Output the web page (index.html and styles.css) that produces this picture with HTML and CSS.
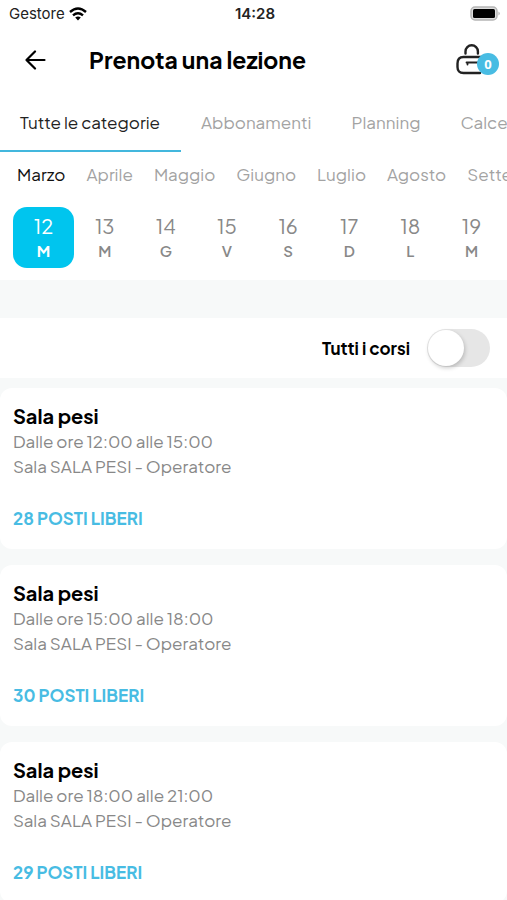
FILE: index.html
```html
<!DOCTYPE html>
<html lang="it">
<head>
<meta charset="utf-8">
<meta name="viewport" content="width=device-width, initial-scale=1">
<title>Prenota una lezione</title>
<link rel="stylesheet" href="styles.css">
</head>
<body>
<div class="status">
  <div class="carrier">Gestore
    <svg width="18" height="14" viewBox="0 0 18 14" aria-hidden="true"><g fill="none" stroke="#000" stroke-width="2.4"><path d="M1 5Q9-2 17 5"/><path d="M4 8.3Q9 4 14 8.3"/></g><path d="M6.2 10.6Q9 8.4 11.8 10.6L9 13.6z"/></svg>
  </div>
  <time class="clock">14:28</time>
  <svg class="battery" width="31" height="16" viewBox="0 0 31 16" aria-hidden="true"><rect x="1" y="1" width="26" height="13" rx="4" fill="#ddd" stroke="#b5b5b5" stroke-width="1.5"/><rect x="3" y="3" width="22" height="9" rx="1.5"/><path d="M28.5 5.5Q31 7.5 28.5 9.5z" fill="#aaa"/></svg>
</div>
<header class="header">
  <button class="back" aria-label="Indietro"><svg width="22" height="20" viewBox="0 0 22 20"><path d="M20.5 10H2.5M11 1.5L2.5 10L11 18.5" fill="none" stroke="#000" stroke-width="2.2" stroke-linecap="round" stroke-linejoin="round"/></svg></button>
  <h1>Prenota una lezione</h1>
  <button class="bag" aria-label="Carrello"><svg width="43" height="32" viewBox="0 0 43 32"><g fill="none" stroke="#222" stroke-width="2.4" stroke-linecap="round"><path d="M9.500 9.500V7.500a6.200 6.200 0 0 1 12.400 0v2"/><path d="M24 29H7.500Q1.500 29 1.500 23V19.500Q1.500 13 7.500 13H27"/><path d="M10.500 18.500H23M11.500 19v1.500" stroke-width="1.800"/></g></svg><span class="badge">0</span></button>
</header>
<nav class="tabs" aria-label="Categorie">
  <a class="tab active" href="#tutte">Tutte le categorie</a>
  <a class="tab" href="#abbonamenti">Abbonamenti</a>
  <a class="tab" href="#planning">Planning</a>
  <a class="tab" href="#calcetto">Calcetto</a>
</nav>
<nav class="months" aria-label="Mesi">
  <a class="active" href="#marzo">Marzo</a><a href="#aprile">Aprile</a><a href="#maggio">Maggio</a><a href="#giugno">Giugno</a><a href="#luglio">Luglio</a><a href="#agosto">Agosto</a><a href="#settembre">Settembre</a>
</nav>
<div class="days">
  <button class="day active">12<b>M</b></button>
  <button class="day">13<b>M</b></button>
  <button class="day">14<b>G</b></button>
  <button class="day">15<b>V</b></button>
  <button class="day">16<b>S</b></button>
  <button class="day">17<b>D</b></button>
  <button class="day">18<b>L</b></button>
  <button class="day">19<b>M</b></button>
</div>
<div class="filter">
  <label for="all">Tutti i corsi</label>
  <input class="switch" id="all" type="checkbox" role="switch">
</div>
<main class="list">
  <article class="card"><h2>Sala pesi</h2><p>Dalle ore 12:00 alle 15:00</p><p>Sala SALA PESI - Operatore</p><strong>28 POSTI LIBERI</strong></article>
  <article class="card"><h2>Sala pesi</h2><p>Dalle ore 15:00 alle 18:00</p><p>Sala SALA PESI - Operatore</p><strong>30 POSTI LIBERI</strong></article>
  <article class="card"><h2>Sala pesi</h2><p>Dalle ore 18:00 alle 21:00</p><p>Sala SALA PESI - Operatore</p><strong>29 POSTI LIBERI</strong></article>
</main>
</body>
</html>
```
FILE: styles.css
```css
* { box-sizing: border-box; }
body {
  margin: 0;
  height: 100vh;
  overflow: hidden;
  background: #f7f9f9;
  color: #000;
  font: 400 17px/24px "Plus Jakarta Sans", Lato, "Liberation Sans", sans-serif;
}
button { border: 0; padding: 0; background: none; font: inherit; color: inherit; }
a { color: inherit; text-decoration: none; }
svg { display: block; flex: none; }
h1, h2, p { margin: 0; }

.status {
  display: grid;
  grid-template-columns: 1fr auto 1fr;
  align-items: center;
  height: 28px;
  padding: 0 6px 0 9px;
  background: #fff;
  font: 400 15px/20px Inter, sans-serif;
  color: #222;
}
.carrier { display: flex; align-items: center; gap: 4px; }
.clock { font-weight: 600; }
.battery { justify-self: end; }

.header {
  display: flex;
  align-items: center;
  height: 63px;
  padding: 0 8px 0 24px;
  background: #fff;
}
.back { width: 65px; }
h1 { flex: 1; font-size: 23px; line-height: 32px; font-weight: 700; }
.bag { position: relative; }
.badge {
  position: absolute;
  right: 0;
  bottom: 1px;
  width: 22px;
  height: 22px;
  border-radius: 50%;
  background: #48bce3;
  color: #fff;
  font-family: "Open Sans", sans-serif;
  font-size: 13px;
  line-height: 22px;
  font-weight: 700;
}

.tabs {
  display: flex;
  height: 61px;
  overflow: hidden;
  background: #fff;
  color: #a3a3a3;
  white-space: nowrap;
}
.tab { flex: none; padding: 19px 20px 0; border-bottom: 2px solid transparent; }
.tab.active { padding-right: 21px; border-color: #43b7dd; color: #222; }

.months {
  display: flex;
  gap: 21px;
  overflow: hidden;
  padding: 10px 0 11px 17px;
  background: #fff;
  color: #a3a3a3;
}
.months .active { color: #111; }

.days {
  display: grid;
  grid-template-columns: repeat(8, 1fr);
  padding: 10px 5px 12px 13px;
  background: #fff;
  color: #888;
}
.day { height: 61px; border-radius: 14px; font-size: 20px; line-height: 26px; }
.day b { display: block; font-size: 15px; line-height: 24px; font-weight: 600; }
.day.active { background: #00c5ee; color: #fff; }
.day.active b { font-weight: 700; }

.filter {
  display: flex;
  align-items: center;
  justify-content: flex-end;
  gap: 17px;
  height: 60px;
  margin-top: 38px;
  padding: 0 17px;
  background: #fff;
  font-weight: 700;
}
.switch {
  appearance: none;
  display: flex;
  width: 63px;
  height: 38px;
  margin: 0;
  padding: 1px;
  border-radius: 19px;
  background: #e6e6e6;
}
.switch::before {
  content: "";
  width: 36px;
  height: 36px;
  border-radius: 50%;
  background: #fff;
  box-shadow: 1px 2px 4px #0003;
}
.switch:checked { background: #00c5ee; justify-content: flex-end; }

.list { display: grid; gap: 16px; padding-top: 10px; }
.card { padding: 15px 13px 19px; border-radius: 12px; background: #fff; color: #888; }
.card h2 { color: #000; font-size: 20px; line-height: 26px; font-weight: 700; }
.card p { line-height: 25px; }
.card strong { display: block; margin-top: 27px; color: #48bce3; line-height: 24px; font-weight: 700; }
```
